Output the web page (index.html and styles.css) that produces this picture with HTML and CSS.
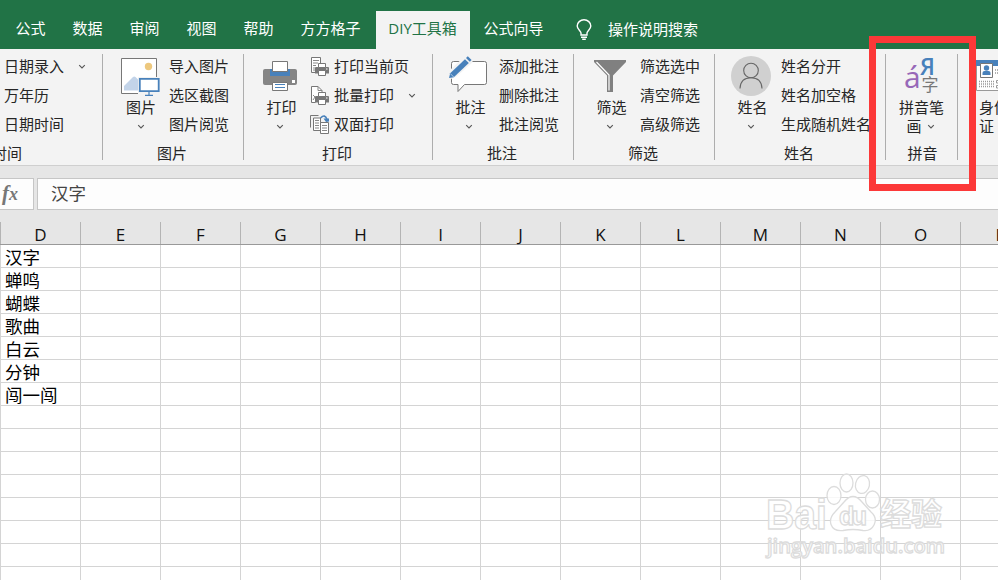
FILE: index.html
```html
<!DOCTYPE html>
<html lang="zh-CN">
<head>
<meta charset="utf-8">
<title>DIY工具箱</title>
<link rel="stylesheet" href="styles.css">
</head>
<body>
<svg width="0" height="0" class="defs" aria-hidden="true">
  <symbol id="chev" viewBox="0 0 8 6"><path d="M1.2 1.2 L4 4 L6.8 1.2" fill="none" stroke="#555" stroke-width="1.1"/></symbol>
  <symbol id="mini-printer" viewBox="0 0 14 13">
    <path d="M1 4h12q1 0 1 1v5.500h-14v-5.500q0-1 1-1z" fill="#777"/>
    <path d="M3.500 .5h7v4h-7z" fill="#fff" stroke="#777"/>
    <path d="M3.500 7.500h7v5h-7z" fill="#fff" stroke="#777"/>
    <path d="M11 6h1.500" stroke="#fff"/>
  </symbol>
</svg>

<nav class="tabs">
  <span class="tab">公式</span><span class="tab">数据</span><span class="tab">审阅</span><span class="tab">视图</span><span class="tab">帮助</span><span class="tab">方方格子</span>
  <span class="tab active">DIY工具箱</span>
  <span class="tab">公式向导</span>
  <svg class="bulb" width="16" height="22" viewBox="0 0 16 22"><path d="M5 16v-2c0-2-3.800-3.500-3.800-7a6.800 6.200 0 0 1 13.600 0c0 3.500-3.800 5-3.800 7v2z M5 18.200h6 M6.200 20.300h3.600" fill="none" stroke="#fff" stroke-width="1.400"/></svg>
  <span class="search">操作说明搜索</span>
</nav>

<section class="ribbon">
  <div class="group g-date">
    <div class="body"><ul class="cmds">
      <li>日期录入<svg class="chev far"><use href="#chev"/></svg></li><li>万年历</li><li>日期时间</li>
    </ul></div>
    <div class="title">时间</div>
  </div>
  <div class="group g-pic">
    <div class="body">
      <div class="big">
        <svg width="40" height="40" viewBox="0 0 40 40">
          <path d="M.5 2.500h35v35h-35z" fill="#fff" stroke="#777"/>
          <circle cx="27.500" cy="10.500" r="3.700" fill="#edc87e"/>
          <path d="M3 34.500v-4.500l9-9q1.300-1 2.500 0l4 4v9.500z" fill="#c3d4e9"/>
          <path d="M17 21h22.500v19.500h-22.500z" fill="#f3f3f3"/>
          <path d="M18.800 22.800h18.900v12.400h-18.900z" fill="#fff" stroke="#4881bb" stroke-width="1.800"/>
          <path d="M28 36v3M24 39.300h8" stroke="#4881bb" stroke-width="1.200"/>
        </svg>
        <span>图片</span><svg class="chev"><use href="#chev"/></svg>
      </div>
      <ul class="cmds"><li>导入图片</li><li>选区截图</li><li>图片阅览</li></ul>
    </div>
    <div class="title">图片</div>
  </div>
  <div class="group g-print">
    <div class="body">
      <div class="big">
        <svg width="40" height="40" viewBox="0 0 40 40">
          <path d="M5 13h30q2 0 2 2v12q0 2-2 2h-30q-2 0-2-2v-12q0-2 2-2z" fill="#858585"/>
          <path d="M10 13h20v7h-20z" fill="#4881bb"/><path d="M12.500 5.500h15v10h-15z" fill="#fff" stroke="#777"/>
          <path d="M12.500 26.500h15v8h-15z" fill="#fff" stroke="#777"/><path d="M15 28.500h10M15 31.500h10" stroke="#4881bb"/>
          <path d="M32 24h3v3h-3z" fill="#fff"/>
        </svg>
        <span>打印</span><svg class="chev"><use href="#chev"/></svg>
      </div>
      <ul class="cmds icons">
        <li><svg class="ico" viewBox="0 0 20 20"><path d="M1.500 15.500v-15h9v7M1.500 15.500h4" fill="#fff" stroke="#777"/><path d="M3 3.500h6M3 6h5M3 8.500h3M3 11h2M3 13h2" stroke="#888"/><use href="#mini-printer" x="5" y="6" width="14" height="13"/></svg>打印当前页</li>
        <li><svg class="ico" viewBox="0 0 20 20"><path d="M5.500 16.500h-4v-16h6.500l4 4v3" fill="#fff" stroke="#777"/><path d="M8 .5v4h4M3 9l2 2-2 3" fill="none" stroke="#888"/><use href="#mini-printer" x="5" y="6" width="14" height="13"/></svg>批量打印<svg class="chev far"><use href="#chev"/></svg></li>
        <li><svg class="ico" viewBox="0 0 20 20"><path d="M.5 12.500v-12h8" fill="none" stroke="#777"/><path d="M3.500 15.500v-12.500h7v12.500z" fill="#fff" stroke="#777"/><path d="M5 5.500h4M5 8h4M5 10.500h4M5 13h4" stroke="#888"/><path d="M10.500 7.500h8v11h-8z" fill="#fff" stroke="#777"/><path d="M12 10.500h5M12 13h5M12 15.500h5" stroke="#888"/><path d="M10.500 3q4.500-4.500 6.500 1.500" fill="none" stroke="#4881bb" stroke-width="1.600"/><path d="M13.500 3.500h5.500v3l-3 .5z" fill="#4881bb"/></svg>双面打印</li>
      </ul>
    </div>
    <div class="title">打印</div>
  </div>
  <div class="group g-note">
    <div class="body">
      <div class="big">
        <svg width="40" height="40" viewBox="0 0 40 40">
          <path d="M4.500 5.500h31q2 0 2 2v19q0 2-2 2h-20l-6.500 7v-7h-4.500q-2 0-2-2v-19q0-2 2-2z" fill="#fff" stroke="#777"/>
          <path d="M-1 24l2-10 16-15 7 7-17 15z" fill="#f3f3f3"/>
          <path d="M0 22l1.200-4.800 14.800-14 3.800 3.800-15 14.200z" fill="#4881bb"/><path d="M17 2l1.800-1.800 3.800 3.800-1.800 1.800z" fill="#4881bb"/>
          <path d="M1.200 17.500l3.500 3.500" stroke="#c8daec" stroke-width=".8"/>
        </svg>
        <span>批注</span><svg class="chev"><use href="#chev"/></svg>
      </div>
      <ul class="cmds"><li>添加批注</li><li>删除批注</li><li>批注阅览</li></ul>
    </div>
    <div class="title">批注</div>
  </div>
  <div class="group g-filter">
    <div class="body">
      <div class="big">
        <svg width="40" height="40" viewBox="0 0 40 40">
          <path d="M4 4h32v2l-13 13.500v16.500h-6v-16.500l-13-13.500z" fill="#808080"/><path d="M6.500 6l12.500 13v15.500" fill="none" stroke="#fff" stroke-width="1.200"/>
        </svg>
        <span>筛选</span><svg class="chev"><use href="#chev"/></svg>
      </div>
      <ul class="cmds"><li>筛选选中</li><li>清空筛选</li><li>高级筛选</li></ul>
    </div>
    <div class="title">筛选</div>
  </div>
  <div class="group g-name">
    <div class="body">
      <div class="big">
        <svg width="40" height="40" viewBox="0 0 40 40">
          <circle cx="20" cy="20" r="20" fill="#d0d0d0"/><circle cx="20" cy="14.500" r="7.300" fill="none" stroke="#666" stroke-width="1.100"/>
          <path d="M9 32.500q.5-10.700 11-10.700t11 10.700" fill="none" stroke="#666" stroke-width="1.100"/>
        </svg>
        <span>姓名</span><svg class="chev"><use href="#chev"/></svg>
      </div>
      <ul class="cmds"><li>姓名分开</li><li>姓名加空格</li><li>生成随机姓名</li></ul>
    </div>
    <div class="title">姓名</div>
  </div>
  <div class="group g-pinyin">
    <div class="body">
      <div class="big">
        <svg width="40" height="40" viewBox="0 0 40 40">
          <text x="2" y="32" class="py-a">á</text><text x="18" y="19" class="py-ya">Я</text><text x="19.500" y="35" class="py-zi">字</text>
        </svg>
        <span>拼音笔</span><span class="two">画<svg class="chev"><use href="#chev"/></svg></span>
      </div>
    </div>
    <div class="title">拼音</div>
  </div>
  <div class="group g-id">
    <div class="body">
      <div class="big">
        <svg width="40" height="40" viewBox="0 0 40 40">
          <path d="M.5 4.500h39v30h-39z" fill="#fff" stroke="#999"/><path d="M0 4h40v6h-40z" fill="#4881bb"/>
          <path d="M4.500 7.500h12v14h-12z" fill="#fff" stroke="#777"/><circle cx="10.500" cy="12" r="2.700" fill="#4881bb"/><path d="M6.500 19v-2q0-2 2-2h4q2 0 2 2v2z" fill="#4881bb"/>
          <path d="M19 14h18M19 17h18M3 25.500h15M3 28h15M3 30.500h15" stroke="#999" stroke-width="1.500" stroke-dasharray="1 1"/>
          <path d="M20.500 24.500h16v2.500h-16zM20.500 29.500h16v2.500h-16z" fill="none" stroke="#999"/>
        </svg>
        <span>身份</span><span>证</span>
      </div>
    </div>
  </div>
</section>

<section class="formula">
  <div class="fx">f<small>x</small></div>
  <div class="value">汉字</div>
</section>

<section class="sheet">
  <div class="heads"><b>D</b><b>E</b><b>F</b><b>G</b><b>H</b><b>I</b><b>J</b><b>K</b><b>L</b><b>M</b><b>N</b><b>O</b><b>P</b></div>
  <div class="cells"><p>汉字</p><p>蝉鸣</p><p>蝴蝶</p><p>歌曲</p><p>白云</p><p>分钟</p><p>闯一闯</p></div>
</section>

<svg class="watermark" width="190" height="92" viewBox="0 0 190 92">
  <g fill="#fff" stroke="#dcdcdc" stroke-width="1.300" fill-opacity=".8">
    <text x="2" y="59" class="wm-brand" textLength="61" lengthAdjust="spacingAndGlyphs">Bai</text>
    <ellipse cx="70" cy="25.500" rx="7" ry="9"/><ellipse cx="82.500" cy="13" rx="6.500" ry="9"/><ellipse cx="98.500" cy="14.500" rx="7" ry="9" transform="rotate(12 98.500 14.500)"/><ellipse cx="108.500" cy="29.500" rx="7" ry="8.500"/>
    <path d="M80 32q9-11 18 0l9 10c9 8 2 20-8 18.500q-10-2-20 0c-13 1.500-16-10.500-8-18.500z"/>
    <text x="75" y="55" class="wm-du" textLength="28">du</text>
    <text x="116" y="55" class="wm-cn" textLength="62">经验</text>
    <text x="3" y="83" class="wm-url" textLength="178" lengthAdjust="spacingAndGlyphs">jingyan.baidu.com</text>
  </g>
</svg>
<div class="highlight"></div>
</body>
</html>
```
FILE: styles.css
```css
* { box-sizing: border-box; margin: 0; padding: 0; }
body {
  position: relative; width: 998px; height: 580px; overflow: hidden;
  background: #fff; color: #262626;
  font: 15px/20px "Open Sans", "Noto Sans CJK SC", sans-serif;
}
.defs { position: absolute; }
svg { display: block; flex: none; }

.tabs { display: flex; align-items: flex-end; height: 49px; padding-left: 2px; background: #217346; color: #fff; white-space: nowrap; }
.tab { height: 38px; padding: 7px 13.5px 0; line-height: 20px; }
.tab.active { width: 94px; margin-left: 2px; padding: 7px 1px 0 0; text-align: center; background: #f3f3f3; color: #217346; }
.bulb { margin: 0 15px 8px 19px; }
.search { height: 38px; padding: 8px 0 0 1px; }

.ribbon { display: flex; height: 117px; padding-top: 5px; background: #f3f3f3; border-bottom: 1px solid #cfcfcf; overflow: hidden; white-space: nowrap; }
.group { flex: none; height: 106px; border-right: 1px solid #adadad; }
.body { display: flex; height: 87px; }
.title { height: 20px; margin-top: 2px; padding-right: 2px; text-align: center; }
.big { flex: none; display: flex; flex-direction: column; align-items: center; width: 40px; padding-top: 2px; }
.big > span { line-height: 20px; margin-top: 1px; }
.chev { width: 8px; height: 6px; }
.big > .chev { margin-top: 7px; }
.cmds { list-style: none; }
.cmds li { display: flex; align-items: center; height: 29px; padding-bottom: 5px; }
.chev.far { margin: 2px 0 0 14px; }
.icons .ico { width: 20px; height: 20px; margin: 2px 4px 0 0; }

.g-date { width: 103px; padding-left: 4px; }
.g-date .title { width: 36px; margin-left: -12px; text-align: left; }
.g-pic, .g-note, .g-filter { width: 141px; }
.g-pic .body { padding-left: 18px; }
.g-pic .cmds { margin-left: 8px; }
.g-print { width: 189px; }
.g-print .body { padding-left: 16px; }
.g-print .cmds { margin-left: 10px; }
.g-note .body { padding-left: 16px; }
.g-note .cmds, .g-filter .cmds { margin-left: 10px; }
.g-print .big > span, .g-note .big > span, .g-filter .big > span, .g-name .big > span { padding-left: 3px; }
.g-filter .body { padding-left: 16px; }
.g-name { width: 171px; }
.g-name .body { padding-left: 16px; }
.g-name .cmds { margin-left: 10px; }
.g-pinyin { width: 72px; }
.g-pinyin .title { padding: 0 0 0 2px; }
.g-pinyin .body { justify-content: center; }
.g-pinyin .big > span + span, .g-id .big > span + span { margin-top: -1px; }
.two { display: flex; align-items: center; gap: 5px; margin-left: -2px; }
.two .chev { margin-top: 2px; }
.g-id { width: 60px; padding-left: 18px; border: 0; }
.g-id .big { align-items: flex-start; }
.g-id .big span { padding-left: 3px; }
.py-a { font: 30px "Open Sans"; fill: #9768b8; }
.py-ya { font: 600 23px "Open Sans"; fill: #4881bb; }
.py-zi { font: 17px "Noto Sans CJK SC"; fill: #777; }

.formula { display: flex; gap: 3px; height: 44px; padding: 12px 0 0; background: #e6e6e6; }
.fx, .value { height: 32px; background: #fdfdfd; border: 1px solid #c6c6c6; }
.fx { width: 34px; border-left: 0; padding-left: 2px; font: italic bold 21px/28px "Liberation Serif", serif; color: #777; }
.fx small { font-size: 18px; }
.value { flex: 1; border-right: 0; padding-left: 13px; font-size: 17.5px; line-height: 28px; color: #444; }

.heads { display: flex; height: 35px; padding-top: 12px; background: #e6e6e6; border-bottom: 1px solid #999; }
.heads b { flex: none; width: 80px; padding-top: 2px; text-align: center; font-weight: 400; font-size: 17px; line-height: 22px; color: #111; border-left: 1px solid #b4b4b4; }
.cells {
  height: 335px;
  background: repeating-linear-gradient(to right, #d4d4d4 0 1px, transparent 1px 80px), repeating-linear-gradient(to bottom, transparent 0 22px, #d4d4d4 22px 23px);
}
.cells p { height: 23px; padding-left: 5px; font-size: 17.5px; line-height: 24px; color: #000; }

.watermark { position: absolute; left: 764px; top: 470px; }
.wm-brand { font: bold 42px "Liberation Sans"; }
.wm-du { font: bold 25px "Liberation Sans"; }
.wm-cn { font: bold 31px "Noto Sans CJK SC"; }
.wm-url { font: 600 20px "Open Sans"; }
.highlight { position: absolute; left: 869px; top: 36px; width: 107px; height: 155px; border: 7px solid #fc3838; }
```
